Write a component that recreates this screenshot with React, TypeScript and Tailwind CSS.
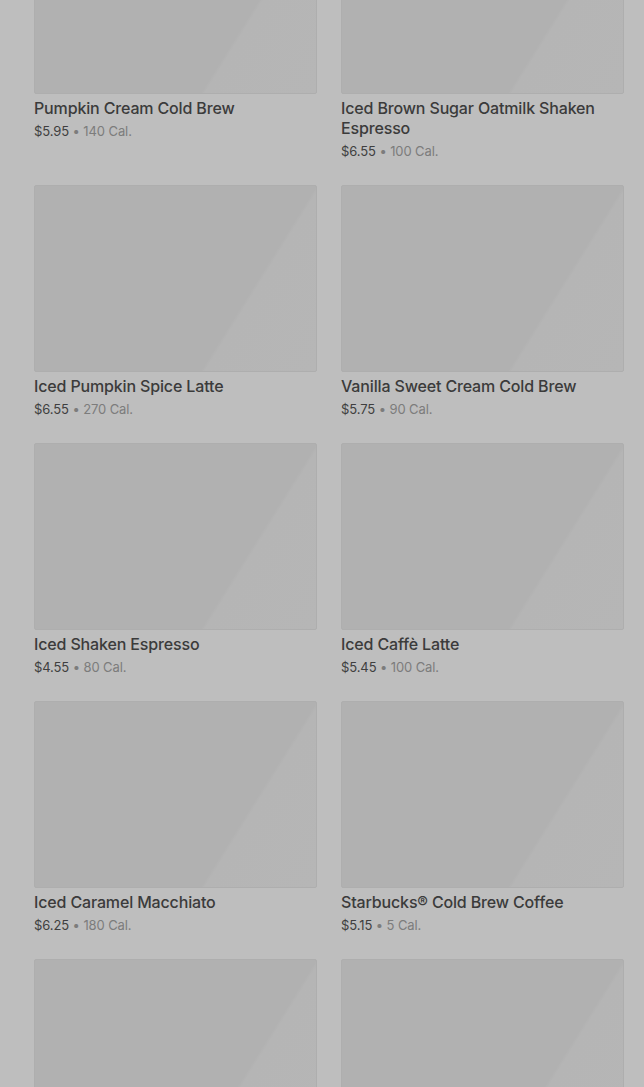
import * as React from "react";

type Drink = { name: string; price: string; cal: string };

const DRINKS: Drink[] = [
  { name: "Pumpkin Cream Cold Brew", price: "$5.95", cal: "140 Cal." },
  { name: "Iced Brown Sugar Oatmilk Shaken Espresso", price: "$6.55", cal: "100 Cal." },
  { name: "Iced Pumpkin Spice Latte", price: "$6.55", cal: "270 Cal." },
  { name: "Vanilla Sweet Cream Cold Brew", price: "$5.75", cal: "90 Cal." },
  { name: "Iced Shaken Espresso", price: "$4.55", cal: "80 Cal." },
  { name: "Iced Caffè Latte", price: "$5.45", cal: "100 Cal." },
  { name: "Iced Caramel Macchiato", price: "$6.25", cal: "180 Cal." },
  { name: "Starbucks® Cold Brew Coffee", price: "$5.15", cal: "5 Cal." },
  { name: "Iced Coffee", price: "$3.95", cal: "80 Cal." },
  { name: "Iced Chai Tea Latte", price: "$5.45", cal: "240 Cal." },
];

function DrinkCard({ drink }: { drink: Drink }) {
  return (
    <div>
      {/* placeholder d'image : skeleton gris avec reflet diagonal */}
      <div className="h-[187px] w-full rounded-[2px] border border-[#aeaeae] bg-[linear-gradient(122deg,#b1b1b1_0%,#b1b1b1_71%,#b5b5b5_72%,#b6b6b6_100%)]" />
      <p className="mt-1 text-[16px] font-medium leading-5 tracking-[-0.15px] text-[#3b3b3b]">
        {drink.name}
      </p>
      <p className="mt-[3px] text-[13px] leading-5 tracking-[-0.1px] text-[#3f3f3f]">
        {drink.price}
        <span className="text-[#7c7c7c]"> • {drink.cal}</span>
      </p>
    </div>
  );
}

export default function App() {
  return (
    <div className="h-[1087px] w-full overflow-hidden bg-[#bebebe] font-['Inter','Noto_Sans',sans-serif]">
      <div className="-mt-[93px] grid grid-cols-2 gap-x-6 gap-y-6 pl-[34px] pr-[20px]">
        {DRINKS.map((d) => (
          <DrinkCard key={d.name} drink={d} />
        ))}
      </div>
    </div>
  );
}
